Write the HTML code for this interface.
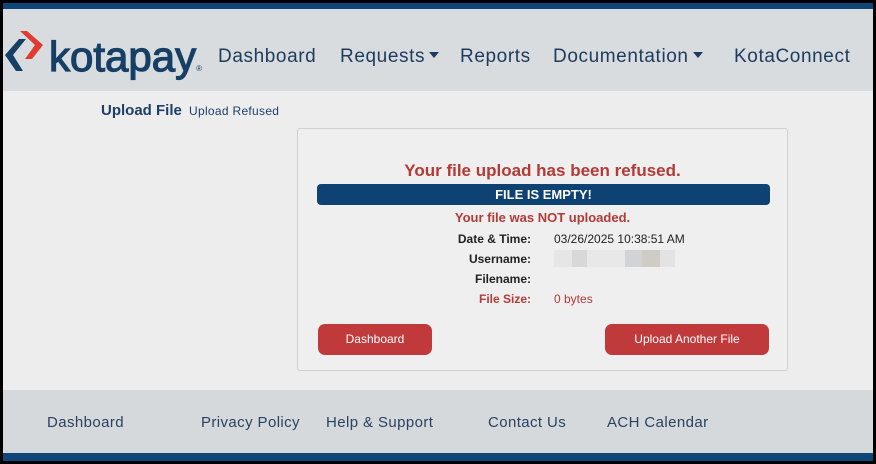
<!DOCTYPE html>
<html><head><style>
*{margin:0;padding:0;box-sizing:border-box}
body{width:876px;height:464px;background:#000;position:relative;overflow:hidden;font-family:"Liberation Sans",sans-serif}
#pg{position:absolute;left:3px;top:3px;width:870px;height:458px;background:#ededed}
.top{position:absolute;left:0;top:0;width:870px;height:6px;background:#0f4577}
.hdr{position:absolute;left:0;top:6px;width:870px;height:82px;background:#d9dcdf}
.nav{position:absolute;top:36px;font-size:19px;color:#1d3b5c;white-space:nowrap;letter-spacing:0.6px}
.car{display:inline-block;width:0;height:0;border-left:5px solid transparent;border-right:5px solid transparent;border-top:6px solid #1d3b5c;vertical-align:middle;margin-left:4px;margin-top:-4px}
.logo{position:absolute;left:46px;top:24px;font-size:42px;color:#163f66;letter-spacing:0px;-webkit-text-stroke:1.2px #163f66}
.card{position:absolute;left:294px;top:125px;width:491px;height:243px;border:1px solid #d0d0d0;border-radius:3px;background:#efefef}
.c{position:absolute;left:0;width:100%;text-align:center}
.bar{position:absolute;left:19px;top:55px;width:453px;height:21px;background:#0e4273;border-radius:4px;color:#fff;font-weight:bold;font-size:13px;text-align:center;line-height:21px}
.lab{position:absolute;right:256px;font-size:12px;font-weight:bold;color:#222}
.val{position:absolute;left:256px;font-size:12px;color:#222}
.btn{position:absolute;top:195px;height:31px;background:#c0393b;border-radius:7px;color:#fff;font-size:12px;text-align:center;line-height:31px}
.ftr{position:absolute;left:0;top:387px;width:870px;height:63px;background:#d6d9dc}
.fl{position:absolute;top:24px;font-size:15px;color:#2a4261;letter-spacing:0.4px}
.bot{position:absolute;left:0;top:450px;width:870px;height:8px;background:#0f4577}
</style></head><body><div id="pg">
<div class="top"></div>
<div class="hdr">
<svg style="position:absolute;left:0;top:20px" width="46" height="46" viewBox="0 0 46 46"><path d="M16 10 L2 26 L13 42 L20 42 L10 26 L23 10Z" fill="#163f66"/><path d="M24 2 L40 16 L29 30 L22 30 L32 16 L17 2Z" fill="#e03a32"/></svg>
<div class="logo">kotapay<span style="font-size:8px;-webkit-text-stroke:0">®</span></div>
<div class="nav" style="left:215px;top:37px">Dashboard</div>
<div class="nav" style="left:337px;top:37px">Requests<span class="car"></span></div>
<div class="nav" style="left:457px;top:37px">Reports</div>
<div class="nav" style="left:550px;top:37px">Documentation<span class="car"></span></div>
<div class="nav" style="left:731px;top:37px">KotaConnect</div>
</div>
<div style="position:absolute;left:98px;top:99px;font-size:15px;font-weight:bold;color:#1d3f66">Upload File <span style="font-size:12px;font-weight:normal;margin-left:3px;letter-spacing:0.3px">Upload Refused</span></div>
<div class="card">
<div class="c" style="top:32px;font-size:17px;font-weight:bold;color:#b33a36">Your file upload has been refused.</div>
<div class="bar">FILE IS EMPTY!</div>
<div class="c" style="top:81px;font-size:13px;font-weight:bold;color:#b33a36">Your file was NOT uploaded.</div>
<div class="lab" style="top:103px">Date &amp; Time:</div><div class="val" style="top:103px">03/26/2025 10:38:51 AM</div>
<div class="lab" style="top:123px">Username:</div><div class="val" style="top:121px;width:121px;height:17px;background:linear-gradient(90deg,#e6e6e6 0,#e6e6e6 18px,#d8d8d8 18px,#d8d8d8 33px,#e8e8e8 33px,#e8e8e8 71px,#d2d3d6 71px,#d2d3d6 88px,#cfccc6 88px,#cfccc6 106px,#e3e3e3 106px)"></div>
<div class="lab" style="top:143px">Filename:</div>
<div class="lab" style="top:163px;color:#b33a36;font-weight:bold">File Size:</div><div class="val" style="top:163px;color:#b33a36">0 bytes</div>
<div class="btn" style="left:20px;width:114px">Dashboard</div>
<div class="btn" style="left:307px;width:164px">Upload Another File</div>
</div>
<div class="ftr">
<div class="fl" style="left:44px">Dashboard</div>
<div class="fl" style="left:198px">Privacy Policy</div>
<div class="fl" style="left:323px">Help &amp; Support</div>
<div class="fl" style="left:485px">Contact Us</div>
<div class="fl" style="left:604px">ACH Calendar</div>
</div>
<div class="bot"></div>
</div></body></html>
